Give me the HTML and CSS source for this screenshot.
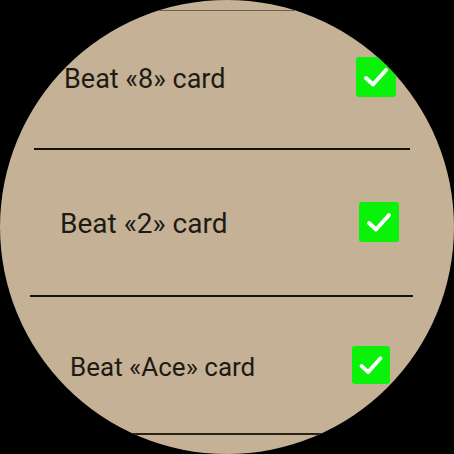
FILE: index.html
```html
<!DOCTYPE html>
<html>
<head>
<meta charset="utf-8">
<link rel="stylesheet" href="styles.css">
</head>
<body>
<div class="watch">
  <div class="list">
    <div class="divider divider-top"></div>
    <div class="row row-1">
      <span class="label">Beat «8» card</span>
      <span class="check">
        <svg viewBox="0 0 40 40" width="40" height="40"><path d="M10 21 L17 27.5 L30 13" fill="none" stroke="#fff" stroke-width="4" stroke-linecap="round" stroke-linejoin="round"/></svg>
      </span>
    </div>
    <div class="divider divider-1"></div>
    <div class="row row-2">
      <span class="label">Beat «2» card</span>
      <span class="check">
        <svg viewBox="0 0 40 40" width="40" height="40"><path d="M10 21 L17 27.5 L30 13" fill="none" stroke="#fff" stroke-width="4" stroke-linecap="round" stroke-linejoin="round"/></svg>
      </span>
    </div>
    <div class="divider divider-2"></div>
    <div class="row row-3">
      <span class="label">Beat «Ace» card</span>
      <span class="check check-sm">
        <svg viewBox="0 0 40 40" width="38" height="38"><path d="M10 21 L17 27.5 L30 13" fill="none" stroke="#fff" stroke-width="4" stroke-linecap="round" stroke-linejoin="round"/></svg>
      </span>
    </div>
    <div class="divider divider-3"></div>
  </div>
</div>
</body>
</html>
```

FILE: styles.css
```css
html, body {
  margin: 0;
  padding: 0;
  background: #000;
}

.watch {
  width: 454px;
  height: 454px;
  border-radius: 50%;
  overflow: hidden;
  background: #c4b196;
  font-family: Roboto, "Liberation Sans", sans-serif;
  color: #1e1a14;
}

.list {
  display: flex;
  flex-direction: column;
  padding-top: 10px;
}

.divider {
  height: 2px;
  background: #14100c;
}

.divider-top {
  height: 1px;
  margin: 0 100px;
  background: #6e5e4c;
}

.divider-1 {
  margin: 0 44px 0 34px;
}

.divider-2 {
  margin: 0 41px 0 30px;
}

.divider-3 {
  margin: 0 60px 0 60px;
  background: #2a2016;
}

.row {
  display: flex;
  align-items: center;
  justify-content: space-between;
}

.label {
  font-size: 27px;
  line-height: 1;
  margin-top: 4px;
}

.check {
  width: 40px;
  height: 40px;
  border-radius: 3px;
  background: #0af20a;
  display: flex;
  align-items: center;
  justify-content: center;
}

.check-sm {
  width: 38px;
  height: 38px;
}

.row-1 {
  padding: 46px 58px 51px 64px;
}

.row-2 {
  padding: 52px 55px 53px 60px;
}

.row-2 .label {
  font-size: 28px;
}

.row-3 {
  padding: 49px 64px 49px 70px;
}

.row-3 .label {
  font-size: 26px;
}
```
